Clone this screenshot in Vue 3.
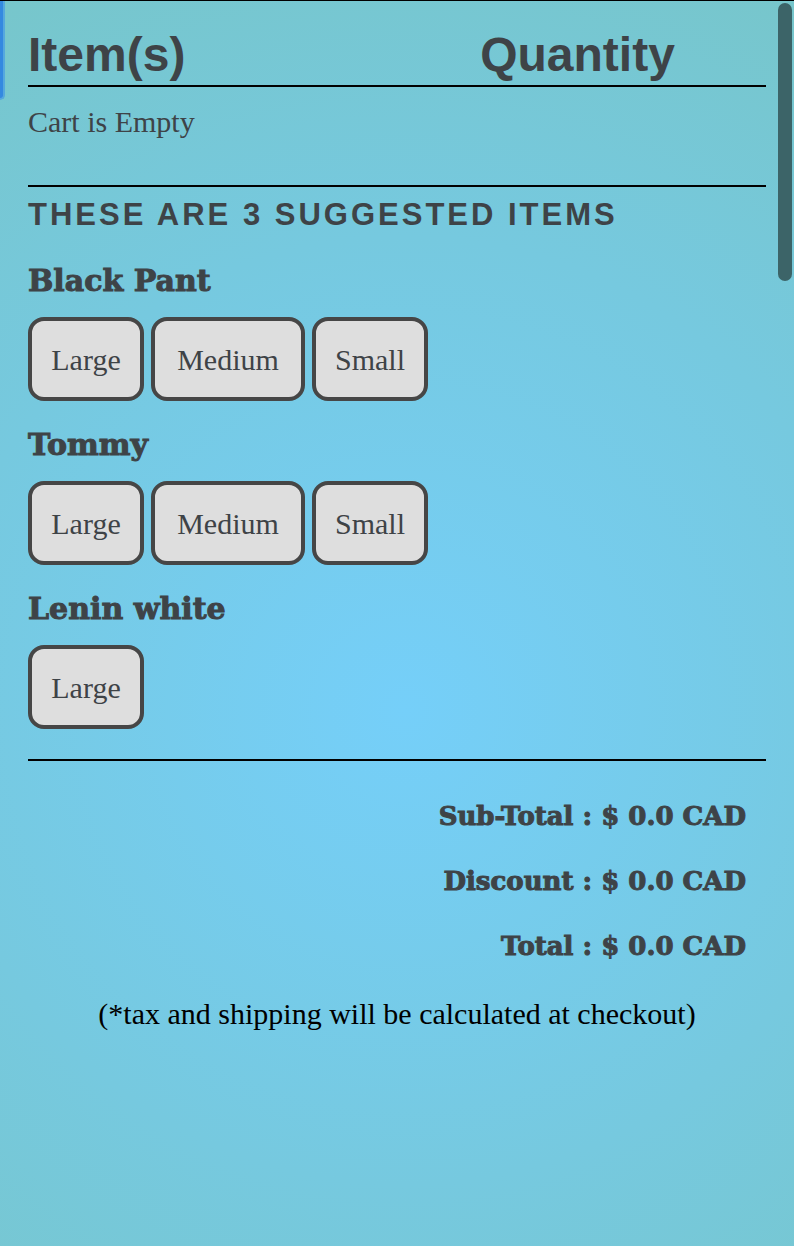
<script setup>
const products = [
  { name: 'Black Pant', sizes: ['Large', 'Medium', 'Small'] },
  { name: 'Tommy', sizes: ['Large', 'Medium', 'Small'] },
  { name: 'Lenin white', sizes: ['Large'] },
]
const totals = [
  { label: 'Sub-Total', amount: '0.0' },
  { label: 'Discount', amount: '0.0' },
  { label: 'Total', amount: '0.0' },
]
</script>

<template>
  <main class="cart">
    <span class="side-tab"></span>
    <span class="scroll-thumb"></span>

    <header class="columns">
      <h1>Item(s)</h1>
      <h1 class="quantity">Quantity</h1>
    </header>

    <p class="empty">Cart is Empty</p>

    <section class="suggestions">
      <h2>THESE ARE 3 SUGGESTED ITEMS</h2>
      <article v-for="product in products" :key="product.name">
        <h3>{{ product.name }}</h3>
        <div class="sizes">
          <button v-for="size in product.sizes" :key="size" type="button">{{ size }}</button>
        </div>
      </article>
    </section>

    <section class="totals">
      <p v-for="row in totals" :key="row.label">{{ row.label }} : $ {{ row.amount }} CAD</p>
    </section>

    <p class="note">(*tax and shipping will be calculated at checkout)</p>
  </main>
</template>

<style>
body {
  margin: 0;
}
</style>

<style scoped>
.cart {
  position: relative;
  box-sizing: border-box;
  min-height: 100vh;
  padding: 24px 28px;
  border-top: 1px solid #000;
  overflow: hidden;
  color: #3e4347;
  background: radial-gradient(circle farthest-corner at 51% 57%, #75cff9 0%, #76c9df 58%, #77c6cb 100%);
  font-family: "Liberation Serif", serif;
  font-size: 30px;
}
h1,
h2,
h3,
p {
  margin: 0;
}
.side-tab {
  position: absolute;
  top: 0;
  left: 0;
  width: 3px;
  height: 97px;
  background: #3489e0;
  border-right: 2px solid #55a8de;
  border-bottom: 2px solid #55a8de;
  border-radius: 0 0 5px 0;
}
.scroll-thumb {
  position: absolute;
  top: 2px;
  right: 2px;
  width: 14px;
  height: 278px;
  border-radius: 7px;
  background: #3c6468;
}
.columns {
  display: grid;
  grid-template-columns: 1fr 1fr;
  border-bottom: 2px solid #000;
}
h1 {
  font: bold 48px/60px "Liberation Sans", Arial, sans-serif;
}
.quantity {
  padding-right: 8px;
  text-align: center;
}
.empty {
  padding: 17px 0 45px;
  line-height: 36px;
}
.suggestions {
  padding-bottom: 30px;
  border-top: 2px solid #000;
  border-bottom: 2px solid #000;
}
h2 {
  padding: 8px 0 20px;
  font: bold 31px/40px "Liberation Sans", Arial, sans-serif;
  letter-spacing: 3px;
}
article + article {
  margin-top: 18px;
}
h3 {
  padding: 6px 0 16px;
  font: bold 30px/40px "DejaVu Serif", serif;
  -webkit-text-stroke: 1px currentColor;
}
.sizes {
  display: grid;
  grid-template-columns: 116px 154px 116px;
  gap: 7px;
}
button {
  padding: 22px 0 20px;
  border: 4px solid #464646;
  border-radius: 16px;
  background: #dedede;
  color: #3e4347;
  font: 30px/34px "Liberation Serif", serif;
}
.totals {
  display: flex;
  flex-direction: column;
  gap: 25px;
  padding: 35px 20px 0;
  font: bold 26px/40px "DejaVu Serif", serif;
  text-align: right;
  -webkit-text-stroke: 1px currentColor;
}
.note {
  padding-top: 30px;
  color: #000;
  line-height: 36px;
  text-align: center;
}
</style>
